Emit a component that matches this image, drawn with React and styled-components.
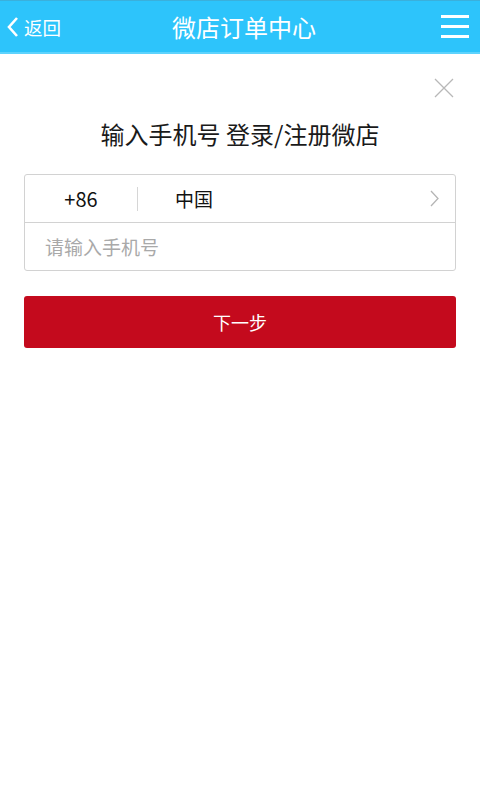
import React from 'react';
import styled, { createGlobalStyle } from 'styled-components';

const GlobalStyle = createGlobalStyle`
  html, body {
    margin: 0;
    padding: 0;
    background: #fff;
    font-family: "Noto Sans CJK SC", "Liberation Sans", sans-serif;
  }
`;

const Page = styled.div`
  width: 480px;
  min-height: 800px;
  background: #fff;
`;

const TopBar = styled.header`
  height: 51px;
  background: #2dc4fb;
  border-top: 1px solid #3ab0dc;
  border-bottom: 2px solid #5ed3fd;
  display: grid;
  grid-template-columns: 100px 1fr 100px;
  align-items: center;
  color: #fff;
`;

const Back = styled.div`
  display: flex;
  align-items: center;
  gap: 5px;
  padding-left: 7px;
  font-size: 18.5px;
`;

const Title = styled.h1`
  margin: 0;
  padding-left: 8px;
  text-align: center;
  font-size: 24px;
  font-weight: 400;
`;

const Menu = styled.div`
  display: flex;
  flex-direction: column;
  align-items: flex-end;
  gap: 7px;
  padding-right: 11px;

  span {
    width: 28px;
    height: 3px;
    background: #fff;
  }
`;

const Body = styled.main`
  padding: 24px 24px 0;
`;

const CloseRow = styled.div`
  display: flex;
  justify-content: flex-end;
  padding-right: 2px;
`;

const Heading = styled.h2`
  margin: 18px 0 23px;
  text-align: center;
  font-size: 24px;
  font-weight: 400;
  color: #1a1a1a;
`;

const FormBox = styled.div`
  border: 1px solid #d2d2d2;
  border-radius: 3px;
`;

const Row = styled.div`
  height: 47px;
  display: flex;
  align-items: center;
  font-size: 19px;
  border-top: ${p => (p.$first ? 'none' : '1px solid #d2d2d2')};
`;

const Code = styled.div`
  width: 112px;
  text-align: center;
  color: #111;
  font-size: 20px;
`;

const Divider = styled.div`
  width: 1px;
  height: 24px;
  background: #d6d6d6;
`;

const Country = styled.div`
  flex: 1;
  padding-left: 37px;
  color: #111;
`;

const Arrow = styled.div`
  display: flex;
  padding-right: 16px;
`;

const Input = styled.input`
  flex: 1;
  border: none;
  outline: none;
  background: transparent;
  padding: 0 0 0 20px;
  font: inherit;
  font-size: 19px;
  color: #111;

  &::placeholder {
    color: #a9a9a9;
  }
`;

const NextButton = styled.button`
  display: block;
  width: 100%;
  height: 52px;
  margin-top: 25px;
  border: none;
  border-radius: 3px;
  background: #c40a1d;
  color: #fff;
  font-family: inherit;
  font-size: 18px;
`;

export default function App() {
  return (
    <Page>
      <GlobalStyle />
      <TopBar>
        <Back>
          <svg width="12" height="22" viewBox="0 0 12 22">
            <path d="M10 2 L2 11 L10 20" fill="none" stroke="#fff" strokeWidth="2.6" />
          </svg>
          <span>返回</span>
        </Back>
        <Title>微店订单中心</Title>
        <Menu>
          <span />
          <span />
          <span />
        </Menu>
      </TopBar>
      <Body>
        <CloseRow>
          <svg width="20" height="20" viewBox="0 0 20 20">
            <path d="M1 1 L19 19 M19 1 L1 19" stroke="#b8b8b8" strokeWidth="1.3" />
          </svg>
        </CloseRow>
        <Heading>输入手机号 登录/注册微店</Heading>
        <FormBox>
          <Row $first>
            <Code>+86</Code>
            <Divider />
            <Country>中国</Country>
            <Arrow>
              <svg width="9" height="17" viewBox="0 0 9 17">
                <path d="M1 1 L8 8.5 L1 16" fill="none" stroke="#b5b5b5" strokeWidth="1.3" />
              </svg>
            </Arrow>
          </Row>
          <Row>
            <Input placeholder="请输入手机号" />
          </Row>
        </FormBox>
        <NextButton>下一步</NextButton>
      </Body>
    </Page>
  );
}
